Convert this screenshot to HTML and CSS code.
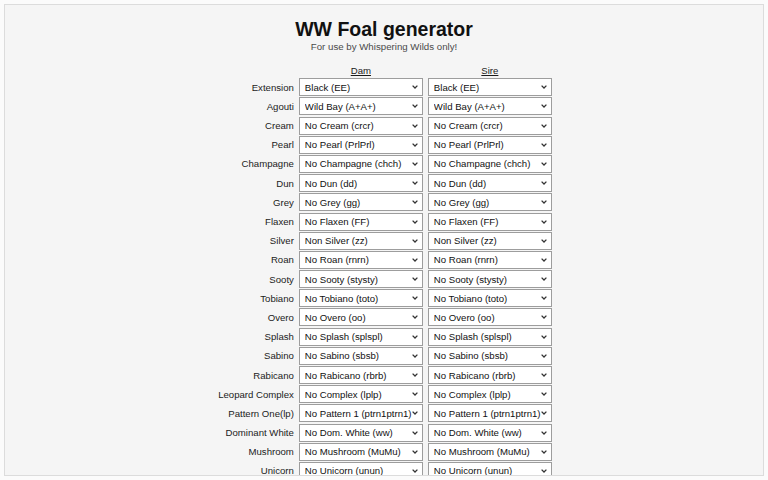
FILE: index.html
```html
<!DOCTYPE html>
<html lang="en">
<head>
<meta charset="utf-8">
<title>WW Foal generator</title>
<link rel="stylesheet" href="styles.css">
</head>
<body>
<main class="frame">
  <header class="intro">
    <h1 class="title">WW Foal generator</h1>
    <p class="subtitle">For use by Whispering Wilds only!</p>
  </header>

  <form class="genes">
    <span></span>
    <span class="parent">Dam</span>
    <span class="parent">Sire</span>

    <label>Extension</label>
    <select><option>Black (EE)</option></select>
    <select><option>Black (EE)</option></select>

    <label>Agouti</label>
    <select><option>Wild Bay (A+A+)</option></select>
    <select><option>Wild Bay (A+A+)</option></select>

    <label>Cream</label>
    <select><option>No Cream (crcr)</option></select>
    <select><option>No Cream (crcr)</option></select>

    <label>Pearl</label>
    <select><option>No Pearl (PrlPrl)</option></select>
    <select><option>No Pearl (PrlPrl)</option></select>

    <label>Champagne</label>
    <select><option>No Champagne (chch)</option></select>
    <select><option>No Champagne (chch)</option></select>

    <label>Dun</label>
    <select><option>No Dun (dd)</option></select>
    <select><option>No Dun (dd)</option></select>

    <label>Grey</label>
    <select><option>No Grey (gg)</option></select>
    <select><option>No Grey (gg)</option></select>

    <label>Flaxen</label>
    <select><option>No Flaxen (FF)</option></select>
    <select><option>No Flaxen (FF)</option></select>

    <label>Silver</label>
    <select><option>Non Silver (zz)</option></select>
    <select><option>Non Silver (zz)</option></select>

    <label>Roan</label>
    <select><option>No Roan (rnrn)</option></select>
    <select><option>No Roan (rnrn)</option></select>

    <label>Sooty</label>
    <select><option>No Sooty (stysty)</option></select>
    <select><option>No Sooty (stysty)</option></select>

    <label>Tobiano</label>
    <select><option>No Tobiano (toto)</option></select>
    <select><option>No Tobiano (toto)</option></select>

    <label>Overo</label>
    <select><option>No Overo (oo)</option></select>
    <select><option>No Overo (oo)</option></select>

    <label>Splash</label>
    <select><option>No Splash (splspl)</option></select>
    <select><option>No Splash (splspl)</option></select>

    <label>Sabino</label>
    <select><option>No Sabino (sbsb)</option></select>
    <select><option>No Sabino (sbsb)</option></select>

    <label>Rabicano</label>
    <select><option>No Rabicano (rbrb)</option></select>
    <select><option>No Rabicano (rbrb)</option></select>

    <label>Leopard Complex</label>
    <select><option>No Complex (lplp)</option></select>
    <select><option>No Complex (lplp)</option></select>

    <label>Pattern One(lp)</label>
    <select><option>No Pattern 1 (ptrn1ptrn1)</option></select>
    <select><option>No Pattern 1 (ptrn1ptrn1)</option></select>

    <label>Dominant White</label>
    <select><option>No Dom. White (ww)</option></select>
    <select><option>No Dom. White (ww)</option></select>

    <label>Mushroom</label>
    <select><option>No Mushroom (MuMu)</option></select>
    <select><option>No Mushroom (MuMu)</option></select>

    <label>Unicorn</label>
    <select><option>No Unicorn (unun)</option></select>
    <select><option>No Unicorn (unun)</option></select>
  </form>
</main>
</body>
</html>
```

FILE: styles.css
```css
html, body {
  margin: 0;
  height: 100%;
}

body {
  background: #fbfbfb;
  font-family: "Liberation Sans", Arial, sans-serif;
  color: #1a1a1a;
  padding: 4px;
  box-sizing: border-box;
  overflow: hidden;
}

.frame {
  height: 472px;
  width: 760px;
  box-sizing: border-box;
  border: 1px solid #dcdcdc;
  background: #f5f5f5;
  overflow: hidden;
  padding-top: 12px;
}

.intro {
  text-align: center;
}

.title {
  margin: 0;
  font-size: 19.5px;
  line-height: 24px;
  font-weight: bold;
  color: #111;
}

.subtitle {
  margin: 0;
  font-size: 9.7px;
  line-height: 11px;
  color: #4a4a4a;
}

.genes {
  display: grid;
  grid-template-columns: auto 124px 124px;
  column-gap: 5px;
  row-gap: 1.2px;
  justify-content: center;
  align-items: center;
  margin-top: 13px;
  padding-left: 2px;
  font-size: 9.6px;
}

.parent {
  text-align: center;
  text-decoration: underline;
  line-height: 12px;
}

.genes label {
  text-align: right;
  color: #222;
}

/* flat select with a small chevron drawn at the right edge */
.genes select {
  -webkit-appearance: none;
  appearance: none;
  height: 18px;
  width: 124px;
  font-family: "Liberation Sans", Arial, sans-serif;
  font-size: 9.6px;
  color: #111;
  background-color: #fff;
  background-image: url("data:image/svg+xml,%3Csvg xmlns='http://www.w3.org/2000/svg' width='6' height='4' viewBox='0 0 6 4'%3E%3Cpath d='M0.6 0.6 L3 3 L5.4 0.6' fill='none' stroke='%23333' stroke-width='1.3'/%3E%3C/svg%3E");
  background-repeat: no-repeat;
  background-position: right 4px center;
  background-size: 6px 4px;
  border: 1px solid #9d9d9d;
  border-radius: 0;
  padding: 0 9px 0 5px;
  margin: 0;
}
```
